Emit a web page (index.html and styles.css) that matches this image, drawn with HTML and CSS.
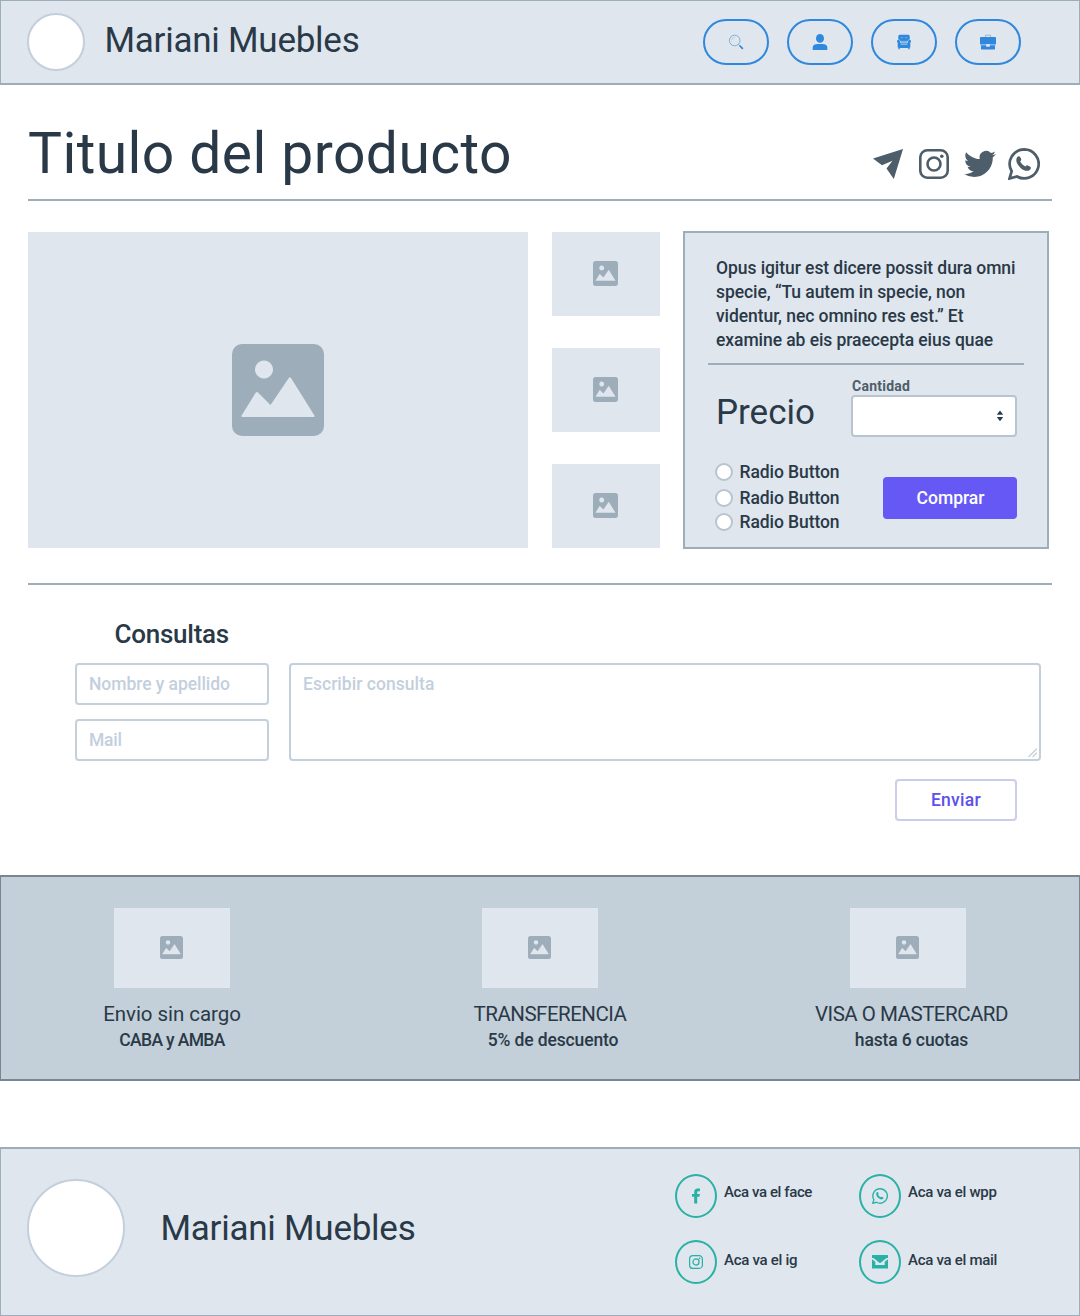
FILE: index.html
```html
<!DOCTYPE html>
<html lang="es">
<head>
<meta charset="utf-8">
<title>Mariani Muebles</title>
<link rel="stylesheet" href="styles.css">
</head>
<body>
<svg class="symbols" aria-hidden="true">
  <symbol id="image" viewBox="0 0 92 92">
    <path fill-rule="evenodd" d="M10 0h72a10 10 0 0 1 10 10v72a10 10 0 0 1-10 10H10A10 10 0 0 1 0 82V10A10 10 0 0 1 10 0zM32 16.500a9 9 0 1 0 .01 0zM10.500 73h71c.9 0 1.400-.8.900-1.600L59 34c-.6-1-1.500-1-2.200 0L38.500 61 26 48.500c-.8-.8-1.600-.8-2.200.1L9.600 71.400c-.5.800 0 1.600.9 1.600z"/>
  </symbol>
  <symbol id="whatsapp" viewBox="0 0 32 32">
    <path d="M16.200 1.400A14.500 14.500 0 0 0 3.700 23.200L1.500 30.500l7.500-2A14.500 14.500 0 1 0 16.200 1.400z" fill="none" stroke="currentColor" stroke-width="2.700"/>
    <path d="M9.200 8.900c1-1.100 2.400-1 3 .2l1 2.200c.3.800-.1 1.400-1 2.300 1.200 2.300 3 4 5.300 5 .9-1 1.500-1.500 2.300-1.100l2.500 1.300c1 .6.600 2.300-.6 3.200-2.300 1.700-5.500.8-8.800-1.800-3.600-2.900-6-7.600-3.700-11.300z"/>
  </symbol>
  <symbol id="instagram" viewBox="0 0 30 30">
    <rect x="1.300" y="1.300" width="27.400" height="27.400" rx="7" fill="none" stroke="currentColor" stroke-width="2.600"/>
    <circle cx="15" cy="15" r="6.500" fill="none" stroke="currentColor" stroke-width="2.600"/>
    <circle cx="22.800" cy="7.200" r="1.800"/>
  </symbol>
</svg>

<header class="header">
  <div class="logo"></div>
  <div class="brand">Mariani Muebles</div>
  <nav class="nav">
    <a class="pill" aria-label="Buscar"><svg class="icon16" viewBox="0 0 16 16"><circle cx="6.700" cy="6.500" r="5.300" fill="none" stroke="#62a6cb" stroke-width=".8"/><path d="M3.500 6.500a3.200 3.200 0 0 1 3.200-3.200" fill="none" stroke="#62a6cb" stroke-width=".3"/><path d="M10.500 10.300l1.500 1.500" stroke="#62a6cb" stroke-width="1"/><path d="M12 12l2.400 2.400" stroke="currentColor" stroke-width="1.700" stroke-linecap="round"/></svg></a>
    <a class="pill" aria-label="Cuenta"><svg class="icon16" viewBox="0 0 16 16"><ellipse cx="8" cy="4.400" rx="4" ry="4.400"/><path d="M.7 16v-2.500C.7 11 3 10 5.600 10h4.800c2.700 0 4.900 1 4.900 3.500V16z"/></svg></a>
    <a class="pill" aria-label="Muebles"><svg class="icon16" viewBox="0 0 16 16"><path d="M4 .8h8c1.300 0 1.700.6 1.700 1.700v3.300h-1.500L10.800 8.500H5.200L3.800 5.800H2.300V2.500C2.300 1.400 2.700.8 4 .8z"/><path d="M1 7c0-1.200 2.700-1.400 3 0l.5 2.200h7L12 7c.3-1.400 3-1.200 3 0 0 1-.7 1.400-.7 2v4.500h-.7v1.700h-1.400v-1.200H3.800v1.200H2.400v-1.700h-.7V9C1.700 8.400 1 8 1 7z"/><path d="M4.600 10.300h6.800M4.600 7.400h6.800" stroke="#b9d8e4" stroke-width=".7"/><path d="M5.500 3.700h1M9.500 3.700h1" stroke="#dfe6ee" stroke-width=".8"/></svg></a>
    <a class="pill" aria-label="Compras"><svg class="icon16" viewBox="0 0 16 16"><path d="M5.500 3V1.200h5V3" fill="none" stroke="#9aabd0" stroke-width=".9"/><path d="M1 3h14c.6 0 1 .4 1 1v6.500H9.800V10H6.200v.5H0V4c0-.6.400-1 1-1z"/><path d="M1 11.300h5.200v1.400h3.600v-1.400H15V15c0 .3-.2.500-.5.500h-13c-.3 0-.5-.2-.5-.5z"/></svg></a>
  </nav>
</header>

<main class="main">
  <div class="title-row">
    <h1 class="title">Titulo del producto</h1>
    <div class="share">
      <svg class="share-plane" viewBox="0 0 30 30"><path d="M0 9.500L30 0 20.800 30 13.500 19.500 19.500 11.800 9 16.300z"/></svg>
      <svg class="share-ig"><use href="#instagram"/></svg>
      <svg class="share-tw" viewBox="0 0 24 24"><path d="M23.953 4.570a10 10 0 01-2.825.775 4.958 4.958 0 002.163-2.723c-.951.555-2.005.959-3.127 1.184a4.920 4.920 0 00-8.384 4.482C7.690 8.095 4.067 6.130 1.640 3.162a4.822 4.822 0 00-.666 2.475c0 1.710.870 3.213 2.188 4.096a4.904 4.904 0 01-2.228-.616v.060a4.923 4.923 0 003.946 4.827 4.996 4.996 0 01-2.212.085 4.936 4.936 0 004.604 3.417 9.867 9.867 0 01-6.102 2.105c-.390 0-.779-.023-1.170-.067a13.995 13.995 0 007.557 2.209c9.053 0 13.998-7.496 13.998-13.985 0-.210 0-.420-.015-.630A9.935 9.935 0 0024 4.590z"/></svg>
      <svg class="share-wa"><use href="#whatsapp"/></svg>
    </div>
  </div>

  <section class="product">
    <div class="ph photo"><svg class="ph-xl"><use href="#image"/></svg></div>
    <div class="thumbs">
      <div class="ph"><svg class="ph-md"><use href="#image"/></svg></div>
      <div class="ph"><svg class="ph-md"><use href="#image"/></svg></div>
      <div class="ph"><svg class="ph-md"><use href="#image"/></svg></div>
    </div>
    <div class="card">
      <p class="desc">Opus igitur est dicere possit dura omni<br>specie, “Tu autem in specie, non<br>videntur, nec omnino res est.” Et<br>examine ab eis praecepta eius quae</p>
      <div class="price-row">
        <div class="price">Precio</div>
        <div class="qty">
          <div class="qty-label">Cantidad</div>
          <div class="select"><svg class="arrows" viewBox="0 0 8 12"><path d="M4 .5L7.200 4.800H.8zM4 11.300L7.200 7H.8z"/></svg></div>
        </div>
      </div>
      <div class="buy-row">
        <div class="radios">
          <label class="radio"><span class="dot"></span>Radio Button</label>
          <label class="radio"><span class="dot"></span>Radio Button</label>
          <label class="radio"><span class="dot"></span>Radio Button</label>
        </div>
        <button class="buy">Comprar</button>
      </div>
    </div>
  </section>

  <section class="contact">
    <h2 class="contact-title">Consultas</h2>
    <div class="fields">
      <div class="field-col">
        <input class="field" placeholder="Nombre y apellido">
        <input class="field mail" placeholder="Mail">
      </div>
      <div class="message">
        <textarea class="field area" placeholder="Escribir consulta"></textarea>
        <svg class="grip" viewBox="0 0 10 10"><path d="M1 8.500L8.500 1M5 8.500L8.500 5" stroke="#c3cdd6" stroke-width="1.200" stroke-linecap="round"/></svg>
      </div>
    </div>
    <button class="send">Enviar</button>
  </section>
</main>

<section class="perks">
  <div class="perk">
    <div class="ph"><svg class="ph-sm"><use href="#image"/></svg></div>
    <div class="perk-title">Envio sin cargo</div>
    <div class="perk-sub caps">CABA y AMBA</div>
  </div>
  <div class="perk perk-mid">
    <div class="ph"><svg class="ph-sm"><use href="#image"/></svg></div>
    <div class="perk-title caps">TRANSFERENCIA</div>
    <div class="perk-sub">5% de descuento</div>
  </div>
  <div class="perk perk-end">
    <div class="ph"><svg class="ph-sm"><use href="#image"/></svg></div>
    <div class="perk-title caps">VISA O MASTERCARD</div>
    <div class="perk-sub">hasta 6 cuotas</div>
  </div>
</section>

<footer class="footer">
  <div class="logo logo-lg"></div>
  <div class="brand">Mariani Muebles</div>
  <div class="links">
    <div class="link"><span class="ring"><svg class="icon16" viewBox="0 0 16 16"><path d="M6.200 15.500V8.700H4V6h2.200V4.200C6.200 1.800 7.500.5 9.600.5H12v2.700h-1.600c-.9 0-1.200.5-1.200 1.300V6h2.700l-.4 2.700H9.200v6.800z"/></svg></span><span class="link-text tight">Aca va el face</span></div>
    <div class="link"><span class="ring"><svg class="icon16"><use href="#whatsapp"/></svg></span><span class="link-text">Aca va el wpp</span></div>
    <div class="link low"><span class="ring"><svg class="icon14"><use href="#instagram"/></svg></span><span class="link-text">Aca va el ig</span></div>
    <div class="link low"><span class="ring"><svg class="icon16" viewBox="0 0 16 16"><path d="M.6 1h14.800c.4 0 .6.200.6.600V4H14.500L8 9.300 1.500 4H0V1.600C0 1.200.2 1 .6 1z"/><path d="M0 5.200l3.300 2.600V11h9.400V7.800L16 5.200V14.500H0z"/></svg></span><span class="link-text">Aca va el mail</span></div>
  </div>
</footer>
</body>
</html>
```
FILE: styles.css
```css
* { box-sizing: border-box; }
body {
  margin: 0;
  background: #fff;
  color: #2a3947;
  font: 500 17.5px/24px Roboto, "Liberation Sans", sans-serif;
}
svg { display: block; flex: none; fill: currentColor; }
.symbols { display: none; }
h1, h2, p { margin: 0; }
button, input, textarea { font: inherit; margin: 0; outline: 0; }

/* Header */
.header {
  display: flex;
  align-items: flex-start;
  height: 85px;
  padding: 12px 58px 0 26px;
  background: #dfe6ee;
  border: 1px solid #9eadba;
  border-bottom-width: 2px;
}
.logo {
  width: 58px;
  height: 58px;
  border: 2px solid #c3cfdd;
  border-radius: 50%;
  background: #fff;
}
.brand {
  margin: 8px 0 0 19.500px;
  font-size: 35px;
  font-weight: 400;
  line-height: 40px;
  letter-spacing: -.25px;
}
.nav { display: flex; gap: 18px; margin: 6px 0 0 auto; color: #2f88dd; }
.pill {
  display: grid;
  place-items: center;
  width: 66px;
  height: 46px;
  border: 2px solid #2f88dd;
  border-radius: 23px;
}
.icon16 { width: 16px; height: 16px; }
.icon14 { width: 14px; height: 14px; }

/* Title */
.main { padding: 0 28px; height: 790px; }
.title-row {
  display: flex;
  justify-content: space-between;
  height: 116px;
  border-bottom: 2px solid #9eadba;
}
.title {
  padding-top: 34px;
  font-size: 57px;
  font-weight: 400;
  line-height: 70px;
  letter-spacing: .41px;
}
.share { display: flex; align-items: center; height: 32px; margin: 63px 12px 0 0; color: #4d5d6a; }
.share-plane { width: 30px; height: 30px; margin-right: 16px; }
.share-ig { width: 30px; height: 30px; margin-right: 15px; }
.share-tw { width: 32px; height: 32px; margin-right: 12px; }
.share-wa { width: 32px; height: 32px; }

/* Product */
.product {
  display: flex;
  height: 384px;
  padding-top: 30px;
  border-bottom: 2px solid #9eadba;
}
.ph { display: grid; place-items: center; padding: 0 1px 1px 0; background: #dfe6ee; color: #9eadba; }
.photo { width: 500px; height: 316px; margin-top: 1px; }
.ph-xl { width: 92px; height: 92px; }
.ph-md { width: 25px; height: 25px; }
.ph-sm { width: 23px; height: 23px; }
.thumbs {
  display: grid;
  grid-template-rows: repeat(3, 84px);
  gap: 32px;
  width: 108px;
  margin: 1px 23px 0 24px;
}
.card {
  width: 366px;
  height: 318px;
  padding: 23px 23px 0;
  border: 2px solid #9eadba;
  background: #dfe6ee;
}
.desc {
  height: 109px;
  padding-left: 8px;
  border-bottom: 2px solid #9eadba;
  letter-spacing: -.07px;
  white-space: nowrap;
}
.price-row { display: flex; justify-content: space-between; padding: 12px 7px 0 8px; }
.price { padding-top: 16px; font-size: 35px; font-weight: 400; line-height: 40px; }
.qty { width: 166px; }
.qty-label {
  padding-left: 1px;
  color: #4d5d6a;
  font-size: 14px;
  font-weight: 700;
  line-height: 18px;
  letter-spacing: .25px;
}
.select {
  display: flex;
  align-items: center;
  justify-content: flex-end;
  height: 42px;
  padding: 0 11px 1px 0;
  border: 2px solid #b9c4d1;
  border-radius: 4px;
  background: #fff;
}
.arrows { width: 8px; height: 12px; }
.buy-row { display: flex; justify-content: space-between; padding: 22px 7px 0; }
.radios { padding-top: 0; }
.radio { display: flex; align-items: center; height: 24px; letter-spacing: -.08px; }
.radio:first-child { margin-bottom: 2px; }
.dot {
  width: 18px;
  height: 18px;
  margin-right: 6.500px;
  border: 2px solid #b9c4d1;
  border-radius: 50%;
  background: #fff;
}
.price-row { height: 75px; margin-bottom: -1px; }
.price-row + .buy-row { padding-top: 21px; }
.buy {
  width: 134px;
  height: 42px;
  margin-top: 17px;
  padding-left: 7px;
  border: 0;
  border-radius: 4px;
  background: #6558f5;
  color: #fff;
}

/* Contact form */
.contact { padding: 34px 11px 0 47px; }
.contact-title {
  padding-left: 39.500px;
  font-size: 26px;
  font-weight: 500;
  line-height: 30px;
  letter-spacing: -.25px;
}
.fields { display: flex; gap: 20px; margin-top: 14px; }
.field-col { display: flex; flex-direction: column; gap: 14px; width: 194px; }
.field {
  display: block;
  width: 100%;
  height: 42px;
  padding: 0 12px;
  border: 2px solid #c3cfda;
  border-radius: 4px;
  background: #fff;
  letter-spacing: -.06px;
}
.field::placeholder { color: #c3cfdd; opacity: 1; }
.mail { letter-spacing: -.25px; }
.message { position: relative; flex: 1; }
.area { height: 98px; padding: 7px 12px; resize: none; letter-spacing: .04px; }
.grip { position: absolute; right: 3px; bottom: 3px; width: 10px; height: 10px; }
.send {
  display: block;
  width: 122px;
  height: 42px;
  margin: 18px 24px 0 auto;
  border: 2px solid #cccdec;
  border-radius: 4px;
  background: #fff;
  color: #5d50ee;
  letter-spacing: .3px;
}

/* Perks band */
.perks {
  display: flex;
  gap: 252px;
  height: 206px;
  padding: 31px 113px 0;
  background: #c3cfd9;
  border: 1px solid #778693;
  border-width: 2px 1px;
}
.perk { display: flex; flex-direction: column; align-items: center; width: 116px; white-space: nowrap; }
.perk .ph { width: 116px; height: 80px; }
.perk-title { margin-top: 13px; font-size: 20.500px; font-weight: 400; line-height: 26px; letter-spacing: -.06px; }
.perk-sub { line-height: 26px; letter-spacing: -.13px; }
.perk-title.caps { letter-spacing: -.5px; }
.perk-sub.caps { letter-spacing: -.65px; }
.perk-mid .perk-title { margin-left: 20px; }
.perk-mid .perk-sub { margin-left: 26px; }
.perk-end .perk-title, .perk-end .perk-sub { margin-left: 7px; }

/* Footer */
.footer {
  display: flex;
  height: 169px;
  margin-top: 66px;
  padding: 30px 0 0 26px;
  background: #dfe6ee;
  border: 1px solid #9eadba;
  border-top-width: 2px;
}
.logo-lg { width: 98px; height: 98px; }
.footer .brand { width: 514.500px; margin: 30px 0 0 35.500px; }
.links {
  display: grid;
  grid-template-columns: 184px 184px;
  grid-auto-rows: 44px;
  row-gap: 22px;
  margin-top: -5px;
}
.link { display: flex; gap: 7px; }
.ring {
  display: grid;
  place-items: center;
  width: 42px;
  height: 44px;
  border: 2px solid #29b1a6;
  border-radius: 50%;
  color: #29b1a6;
}
.link-text { padding-top: 6px; font-size: 15px; letter-spacing: -.29px; }
.link-text.tight { letter-spacing: -.4px; }
.low .link-text { padding-top: 8px; }
```
